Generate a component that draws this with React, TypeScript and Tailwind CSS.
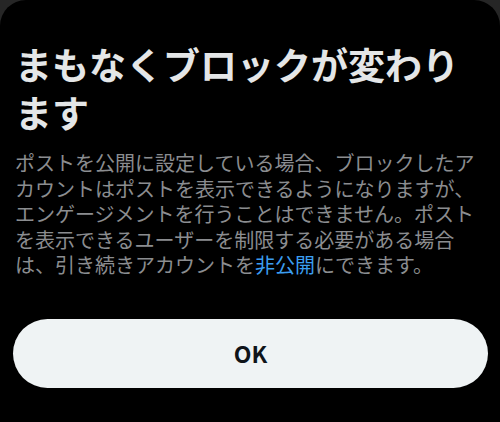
import React from "react";

export default function App() {
  return (
    <div className="w-[500px] h-[422px] bg-[#262626] overflow-hidden">
      <div
        className="w-[500px] h-[422px] bg-black rounded-t-[26px] pl-[15px] pr-[12px] pt-[40px] flex flex-col"
        style={{ fontFamily: '"Noto Sans CJK JP", "Noto Sans", sans-serif' }}
      >
        <h1 className="w-[470px] text-[37px] leading-[48px] font-bold text-[#e4e6e7] m-0">
          まもなくブロックが変わります
        </h1>
        <p className="w-[470px] mt-[14px] text-[20px] leading-[25.5px] text-[#8b8d90]">
          ポストを公開に設定している場合、ブロックしたアカウントはポストを表示できるようになりますが、エンゲージメントを行うことはできません。ポストを表示できるユーザーを制限する必要がある場合は、引き続きアカウントを<span className="text-[#3b9ef0]">非公開</span>にできます。
        </p>
        <button
          className="mt-[41px] ml-[-2px] w-[475px] h-[69px] rounded-full bg-[#eff3f4] flex items-center justify-center text-[23px] font-semibold text-[#0f1419]"
          style={{ fontFamily: '"Noto Sans CJK JP", "Noto Sans", sans-serif' }}
        >
          OK
        </button>
      </div>
    </div>
  );
}
